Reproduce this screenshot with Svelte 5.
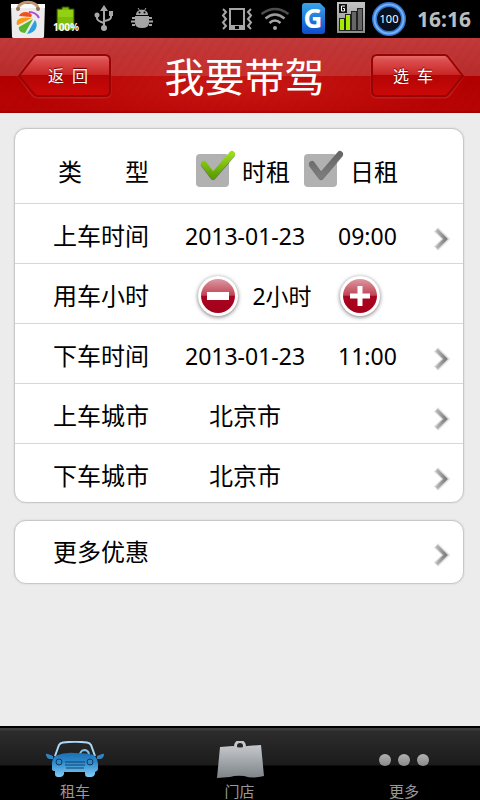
<script lang="ts">
  let rentType: string = $state("hour");
  let hours: number = $state(2);
  let activeTab: string = $state("rent");

  const types = [
    { value: "hour", label: "时租" },
    { value: "day", label: "日租" }
  ];

  const tabs = [
    { id: "rent", label: "租车" },
    { id: "store", label: "门店" },
    { id: "more", label: "更多" }
  ];

  const changeHours = (step: number) => {
    hours = Math.max(1, hours + step);
  };
</script>

{#snippet chevron()}
  <svg class="chevron" width="20" height="26" viewBox="0 0 20 26" aria-hidden="true">
    <path d="M3 3.5L13 13L3 22.5" fill="none" stroke="#e2e2e2" stroke-width="6" />
    <path d="M3.500 4L12.500 13L3.500 22" fill="none" stroke="url(#chevronFill)" stroke-width="3.500" />
  </svg>
{/snippet}

{#snippet dateRow(label: string, date: string, time: string)}
  <button type="button" class="row">
    <span class="row-label">{label}</span>
    <span class="row-value row-value--date">{date}</span>
    <span class="row-value row-value--time">{time}</span>
    {@render chevron()}
  </button>
{/snippet}

{#snippet cityRow(label: string, city: string)}
  <button type="button" class="row">
    <span class="row-label">{label}</span>
    <span class="row-value row-value--city">{city}</span>
    {@render chevron()}
  </button>
{/snippet}

<!-- Shared gradients -->
<svg class="defs" width="0" height="0" aria-hidden="true">
  <defs>
    <linearGradient id="chevronFill" x1="0" x2="1" y1="0" y2="0">
      <stop offset="0" stop-color="#b8b8b8" />
      <stop offset="1" stop-color="#808080" />
    </linearGradient>
    <linearGradient id="btnFill" x1="0" x2="0" y1="0" y2="1">
      <stop offset="0" stop-color="#e87070" />
      <stop offset="0.12" stop-color="#dd5050" />
      <stop offset="0.48" stop-color="#c92525" />
      <stop offset="0.5" stop-color="#b40505" />
      <stop offset="1" stop-color="#cc0808" />
    </linearGradient>
    <linearGradient id="roundFill" x1="0" x2="0" y1="0" y2="1">
      <stop offset="0" stop-color="#dc98a2" />
      <stop offset="0.48" stop-color="#c04355" />
      <stop offset="0.5" stop-color="#a90520" />
      <stop offset="1" stop-color="#a4001c" />
    </linearGradient>
    <linearGradient id="greenTick" x1="0" x2="0" y1="0" y2="1">
      <stop offset="0" stop-color="#9bdc1c" />
      <stop offset="1" stop-color="#5da000" />
    </linearGradient>
    <linearGradient id="greyTick" x1="0" x2="0" y1="0" y2="1">
      <stop offset="0" stop-color="#666" />
      <stop offset="1" stop-color="#7c7c7c" />
    </linearGradient>
    <linearGradient id="carFill" x1="0" x2="0" y1="0" y2="1">
      <stop offset="0" stop-color="#1a70b4" />
      <stop offset="0.4" stop-color="#2f8bcb" />
      <stop offset="1" stop-color="#80cdf8" />
    </linearGradient>
    <linearGradient id="greyFill" x1="0" x2="0" y1="0" y2="1">
      <stop offset="0" stop-color="#c6c9cc" />
      <stop offset="1" stop-color="#7d8388" />
    </linearGradient>
    <linearGradient id="dotFill" x1="0" x2="0" y1="0" y2="1">
      <stop offset="0" stop-color="#b2b2b2" />
      <stop offset="1" stop-color="#888" />
    </linearGradient>
    <linearGradient id="blueFill" x1="0" x2="0" y1="0" y2="1">
      <stop offset="0" stop-color="#38a4ea" />
      <stop offset="1" stop-color="#0d4ccc" />
    </linearGradient>
    <linearGradient id="signalFill" x1="0" x2="0" y1="0" y2="1">
      <stop offset="0" stop-color="#c4c4c4" />
      <stop offset="1" stop-color="#8c8c8c" />
    </linearGradient>
  </defs>
</svg>

<div class="app">
  <div class="status">
    <div class="status-icons">
      <svg width="38" height="38" viewBox="0 0 38 38">
        <path d="M2 4H36L35 37Q35 38 33 38H5Q3 38 3 37Z" fill="#ececec" />
        <path d="M2 4H36V8H2Z" fill="#fafafa" />
        <path d="M9 9C9 0 29 0 29 9" fill="none" stroke="#c39a72" stroke-width="3" />
        <circle cx="9" cy="9" r="2" fill="#8f7358" />
        <circle cx="29" cy="9" r="2" fill="#8f7358" />
        <path d="M10 16C12 11 20 11 23 15L22 17Z" fill="#f0521c" />
        <path d="M8 25C6 19 12 16 23 18L9 25Z" fill="#f79a12" />
        <path d="M10 27L24 19L16 33C12 33 9 30 10 27Z" fill="#58b52c" />
        <path d="M18 34L26 20C30 25 27 33 18 34Z" fill="#2b9fe2" />
        <path d="M20 12C25 12 28 14 30 18" fill="none" stroke="#b04bd8" stroke-width="2" />
      </svg>
      <svg width="38" height="38" viewBox="0 0 38 38">
        <path d="M10 9H15V7H22V9H27V30H10Z" fill="#7fbd0a" stroke="#314d04" stroke-width="1" />
        <path d="M11 10H26V17H11Z" fill="#93d014" />
        <text x="19" y="31" text-anchor="middle" class="battery-text">100%</text>
      </svg>
      <svg width="38" height="38" viewBox="0 0 38 38" fill="#a8a8a8">
        <path d="M19 9V28M12 15V18Q12 21 19 23M26 15V17Q26 20 19 21" fill="none" stroke="#a8a8a8" stroke-width="2" />
        <path d="M19 5L23 11H15Z" />
        <circle cx="12" cy="15" r="2.500" />
        <rect x="24" y="11" width="4" height="5" />
        <circle cx="19" cy="28" r="3" />
      </svg>
      <svg width="38" height="38" viewBox="0 0 38 38" fill="#a5a5a5">
        <path d="M13 15C13 8 25 8 25 15Z" />
        <path d="M15 8L17 11M23 8L21 11" fill="none" stroke="#a5a5a5" stroke-width="1" />
        <path d="M9 18H12M26 18H29M8 21.500H12M26 21.500H30M9 25H12M26 25H29" fill="none" stroke="#a5a5a5" stroke-width="2" />
        <path d="M12 16H26V23Q26 28 19 28Q12 28 12 23Z" />
        <circle cx="16.500" cy="12.500" r="1" fill="#000" />
        <circle cx="21.500" cy="12.500" r="1" fill="#000" />
      </svg>
    </div>
    <div class="status-icons status-icons--right">
      <svg width="38" height="38" viewBox="0 0 38 38" fill="none" stroke="#a6a6a6" stroke-width="2">
        <rect x="12" y="9" width="14" height="20" />
        <path d="M11 25H27V30H11Z" fill="#a6a6a6" stroke="none" />
        <path d="M17 26H21V29H17Z" fill="#000" stroke="none" />
        <path d="M5 9L8 12L5 15.500L8 19L5 22.500L8 26L5 29M33 9L30 12L33 15.500L30 19L33 22.500L30 26L33 29" />
      </svg>
      <svg width="38" height="38" viewBox="0 0 38 38" fill="none" stroke-width="2.500">
        <path d="M5.500 14Q19 4 32.500 14" stroke="#4d4d4d" />
        <path d="M9.500 18.500Q19 10.500 28.500 18.500" stroke="#9c9c9c" />
        <path d="M13.500 23Q19 18 24.500 23" stroke="#a6a6a6" />
        <circle cx="19" cy="28" r="2" fill="#a6a6a6" />
      </svg>
      <svg width="38" height="38" viewBox="0 0 38 38">
        <path d="M11 3H26L31 8V31Q31 34 28 34H11Q8 34 8 31V6Q8 3 11 3Z" fill="url(#blueFill)" />
        <text x="19" y="28" text-anchor="middle" class="g-text">G</text>
      </svg>
      <svg width="38" height="38" viewBox="0 0 38 38">
        <rect x="5" y="2" width="28" height="31" fill="url(#signalFill)" />
        <g stroke="#222" stroke-width="1">
          <rect x="7.500" y="18.500" width="5" height="12" fill="#a5ec00" />
          <rect x="13.500" y="14.500" width="5" height="16" fill="#a5ec00" />
          <rect x="19.500" y="11.500" width="5" height="19" fill="#666" />
          <rect x="25.500" y="8.500" width="5" height="22" fill="#666" />
        </g>
        <rect x="7" y="4" width="8" height="9" fill="#111" />
        <path d="M13 6H9.500V11H12.500V8.500H11" fill="none" stroke="#fff" stroke-width="1" />
      </svg>
      <svg width="38" height="38" viewBox="0 0 38 38">
        <circle cx="19" cy="19" r="14.500" fill="#06101f" stroke="#3277d4" stroke-width="5" />
        <circle cx="19" cy="19" r="14.500" fill="none" stroke="#78b0f4" stroke-width="2" />
        <text x="19" y="23" text-anchor="middle" class="level-text">100</text>
      </svg>
      <time class="clock">16:16</time>
    </div>
  </div>

  <header class="header">
    <button type="button" class="nav-btn nav-btn--back">
      <svg width="96" height="46" viewBox="0 0 96 46" aria-hidden="true">
        <path d="M20 2H88Q93 2 93 7V39Q93 44 88 44H20Q17 44 15 41L2 23L15 5Q17 2 20 2Z" fill="none" stroke="#e04848" stroke-opacity="0.3" stroke-width="3" />
        <path d="M20 2H88Q93 2 93 7V38Q93 43 88 43H20Q18 43 16 40L2 23L16 5Q18 2 20 2Z" fill="url(#btnFill)" stroke="#970404" stroke-width="2" />
      </svg>
      <span>返&ensp;回</span>
    </button>
    <h1>我要带驾</h1>
    <button type="button" class="nav-btn nav-btn--next">
      <svg width="96" height="46" viewBox="0 0 96 46" aria-hidden="true">
        <path d="M76 2H8Q3 2 3 7V39Q3 44 8 44H76Q79 44 81 41L94 23L81 5Q79 2 76 2Z" fill="none" stroke="#e04848" stroke-opacity="0.3" stroke-width="3" />
        <path d="M76 2H8Q3 2 3 7V38Q3 43 8 43H76Q78 43 80 40L94 23L80 5Q78 2 76 2Z" fill="url(#btnFill)" stroke="#970404" stroke-width="2" />
      </svg>
      <span>选&ensp;车</span>
    </button>
  </header>

  <main class="content">
    <section class="card">
      <div class="row row--type" role="radiogroup" aria-labelledby="type-label">
        <span class="row-label row-label--spread" id="type-label"><span>类</span><span>型</span></span>
        <div class="types">
          {#each types as type}
            <label class="type">
              <input type="radio" name="rentType" value={type.value} bind:group={rentType} />
              <svg width="42" height="38" viewBox="0 0 42 38" aria-hidden="true">
                <rect x="1" y="4" width="33" height="33" rx="4" fill="#b1b1b1" />
                <path d="M9 15L18 27L37 5" fill="none" stroke="#333" stroke-opacity="0.5" stroke-width="6" stroke-linecap="round" stroke-linejoin="round" />
                <path
                  d="M9 14L18 26L37 4"
                  fill="none"
                  stroke={rentType === type.value ? "url(#greenTick)" : "url(#greyTick)"}
                  stroke-width="6"
                  stroke-linecap="round"
                  stroke-linejoin="round"
                />
              </svg>
              <span>{type.label}</span>
            </label>
          {/each}
        </div>
      </div>
      {@render dateRow("上车时间", "2013-01-23", "09:00")}
      <div class="row">
        <span class="row-label">用车小时</span>
        <div class="stepper">
          <button type="button" class="round-btn" aria-label="减少" onclick={() => changeHours(-1)}>
            <svg width="34" height="34" viewBox="0 0 34 34">
              <circle cx="17" cy="17" r="17" fill="url(#roundFill)" />
              <rect x="6" y="13" width="22" height="8" fill="#fff" />
            </svg>
          </button>
          <output class="hours">{hours}小时</output>
          <button type="button" class="round-btn" aria-label="增加" onclick={() => changeHours(1)}>
            <svg width="34" height="34" viewBox="0 0 34 34">
              <circle cx="17" cy="17" r="17" fill="url(#roundFill)" />
              <path d="M7 17H27M17 7V27" stroke="#fff" stroke-width="5" />
            </svg>
          </button>
        </div>
      </div>
      {@render dateRow("下车时间", "2013-01-23", "11:00")}
      {@render cityRow("上车城市", "北京市")}
      {@render cityRow("下车城市", "北京市")}
    </section>

    <section class="card">
      <button type="button" class="row row--more">
        <span class="row-label">更多优惠</span>
        {@render chevron()}
      </button>
    </section>
  </main>

  <nav class="tabs">
    {#each tabs as tab}
      <button
        type="button"
        class="tab"
        aria-current={activeTab === tab.id ? "page" : undefined}
        onclick={() => (activeTab = tab.id)}
      >
        <svg width="60" height="40" viewBox="0 0 60 40" aria-hidden="true">
          {#if tab.id === "rent"}
            <path d="M10 15L14 4Q15 2 18 1.500Q30 0 42 1.500Q45 2 46 4L50 15" fill="none" stroke="#a8d8f4" stroke-width="2" />
            <path d="M35 13Q36 9 40 9Q44 10 44 14" fill="none" stroke="#7fbfe8" stroke-width="2" />
            <path d="M10 15Q20 11 30 12Q42 12 49 14Q53 18 53 24V28Q53 30 50 31V33Q49 36 46 36H43Q40 36 40 33V31H19V33Q18 36 15 36H13Q10 36 10 33V30Q7 30 7 28V23Q7 18 10 15Z" fill="url(#carFill)" />
            <path d="M1 14Q0 12 3 13L8 15V18L5 18Q2 18 1 14ZM59 14Q60 12 57 13L52 15V18L55 18Q58 18 59 14Z" fill="#2f83c0" />
            <circle cx="14" cy="21" r="3" fill="#3489c4" stroke="#0c3960" stroke-width="1" />
            <circle cx="45" cy="21" r="3" fill="#3489c4" stroke="#0c3960" stroke-width="1" />
            <path d="M20 21H40M20 24H40M21 27H39" stroke="#0d426e" stroke-width="1" />
          {:else if tab.id === "store"}
            <circle cx="30" cy="5" r="4.500" fill="none" stroke="#c6c9cc" stroke-width="3" />
            <path d="M10 6L23 5Q30 8 37 5L51 4L54 35Q43 38 34 35Q26 34 20 36L7 37Z" fill="url(#greyFill)" />
          {:else}
            <circle cx="11" cy="19" r="6" fill="url(#dotFill)" />
            <circle cx="30" cy="19" r="6" fill="url(#dotFill)" />
            <circle cx="49" cy="19" r="6" fill="url(#dotFill)" />
          {/if}
        </svg>
        <span>{tab.label}</span>
      </button>
    {/each}
  </nav>
</div>

<style>
  :global(body) {
    margin: 0;
    background: #ececec;
  }

  .defs {
    position: absolute;
  }

  .app {
    display: flex;
    flex-direction: column;
    min-height: 100vh;
    font-family: "Noto Sans", "Noto Sans CJK SC", sans-serif;
    color: #000;
  }

  button {
    margin: 0;
    padding: 0;
    border: 0;
    background: none;
    color: inherit;
    font: inherit;
    cursor: pointer;
  }

  svg {
    display: block;
    flex-shrink: 0;
  }

  /* Status bar */
  .status {
    display: flex;
    justify-content: space-between;
    height: 38px;
    padding: 0 9px;
    background: #000;
  }

  .status-icons {
    display: flex;
    align-items: center;
  }

  .clock {
    margin-left: 9px;
    color: #bdbdbd;
    font-size: 21px;
    font-weight: 700;
    line-height: 38px;
  }

  .battery-text {
    fill: #fff;
    font-size: 10px;
    font-weight: 700;
  }

  .g-text {
    fill: #fff;
    font-size: 26px;
    font-weight: 700;
  }

  .level-text {
    fill: #fff;
    font-size: 11px;
  }

  /* Header */
  .header {
    display: flex;
    align-items: center;
    justify-content: space-between;
    height: 75px;
    padding: 0 15px 0 17px;
    background:
      repeating-linear-gradient(125deg, rgba(90, 0, 0, 0.03) 0 3px, transparent 3px 8px),
      radial-gradient(ellipse at 50% 60%, rgba(235, 60, 50, 0.4), transparent 65%),
      linear-gradient(#c23a3a 0%, #b92b2b 50%, #b20000 51%, #b80404 96%, #900 100%);
  }

  .header h1 {
    margin: 0;
    padding: 2px 0 0 7px;
    color: #fff;
    font-size: 40px;
    font-weight: 400;
    line-height: 73px;
  }

  .nav-btn {
    display: grid;
    place-items: center;
    color: #fff;
    font-size: 16px;
    line-height: 22px;
    text-shadow: 0 -1px 1px #600;
  }

  .nav-btn > * {
    grid-area: 1 / 1;
  }

  .nav-btn--back span {
    padding-left: 6px;
  }

  .nav-btn--next span {
    padding-right: 8px;
  }

  /* Cards */
  .content {
    display: flex;
    flex: 1;
    flex-direction: column;
    gap: 17px;
    padding: 15px 16px 15px 14px;
  }

  .card {
    border: 1px solid #c8c8c8;
    border-radius: 12px;
    background: #fff;
    box-shadow: 0 0 2px #ccc;
    overflow: hidden;
  }

  .row {
    display: flex;
    align-items: center;
    box-sizing: border-box;
    width: 100%;
    height: 60px;
    padding: 5px 10px 0 38px;
    border-bottom: 1px solid #d8d8d8;
    font-size: 24px;
    line-height: 36px;
    text-align: left;
  }

  .row:last-child {
    height: 58px;
    border-bottom: 0;
  }

  .row--type {
    height: 75px;
    padding-top: 12px;
  }

  .row.row--more {
    height: 62px;
    padding-top: 0;
  }

  .row-label {
    width: 96px;
    flex-shrink: 0;
  }

  .row-label--spread {
    display: flex;
    justify-content: space-between;
    box-sizing: border-box;
    padding-left: 5px;
  }

  .row-value--date {
    width: 153px;
    margin-left: 36px;
    font-size: 23px;
  }

  .row-value--time {
    font-size: 23px;
  }

  .row-value--city {
    margin-left: 60px;
  }

  .chevron {
    margin-top: 6px;
    margin-left: auto;
  }

  .types {
    display: flex;
    gap: 13px;
    margin-left: 46px;
  }

  .type {
    display: flex;
    align-items: center;
    gap: 5px;
    cursor: pointer;
  }

  .type svg {
    margin-top: -6px;
  }

  .type input {
    position: absolute;
    opacity: 0;
    width: 0;
    height: 0;
    margin: 0;
  }

  .type input:focus-visible + svg {
    outline: 2px solid #5da000;
  }

  .stepper {
    display: flex;
    align-items: center;
    margin-left: 49px;
  }

  .round-btn {
    padding: 3px;
    border-radius: 50%;
    background: #fff;
    box-shadow: 0 1px 4px #777;
  }

  .hours {
    min-width: 88px;
    padding-right: 14px;
    font-size: 23px;
    text-align: center;
  }

  /* Bottom tabs */
  .tabs {
    display: flex;
    justify-content: space-between;
    box-sizing: border-box;
    height: 74px;
    padding: 13px 31px 0 30px;
    border-top: 2px solid #000;
    background: linear-gradient(#3c3c3c 0, #3c3c3c 2px, #2c2c2c 3px, #1b1b1b 37px, #000 38px);
  }

  .tab {
    display: flex;
    flex-direction: column;
    align-items: center;
    width: 90px;
    color: #999;
    font-size: 15px;
    line-height: 20px;
  }
</style>
